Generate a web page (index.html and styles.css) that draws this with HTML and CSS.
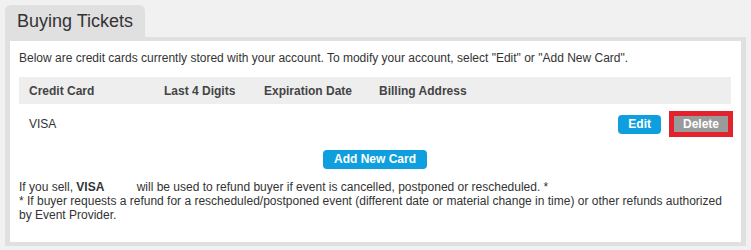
FILE: index.html
```html
<!DOCTYPE html>
<html lang="en">
<head>
  <meta charset="UTF-8">
  <title>Buying Tickets</title>
  <link rel="stylesheet" href="styles.css">
</head>
<body>
  <div class="tab">Buying Tickets</div>
  <div class="panel">
    <div class="panel-body">
      <p class="intro">Below are credit cards currently stored with your account. To modify your account, select "Edit" or "Add New Card".</p>

      <div class="card-table">
        <div class="card-head">
          <span>Credit Card</span>
          <span>Last 4 Digits</span>
          <span>Expiration Date</span>
          <span>Billing Address</span>
        </div>
        <div class="card-row">
          <span>VISA</span>
          <span></span>
          <span></span>
          <span></span>
          <div class="actions">
            <a href="#" class="btn btn-blue">Edit</a>
            <a href="#" class="btn btn-gray btn-marked">Delete</a>
          </div>
        </div>
      </div>

      <div class="add-row">
        <a href="#" class="btn btn-blue btn-add">Add New Card</a>
      </div>

      <p class="note">If you sell, <b class="card-name">VISA</b> will be used to refund buyer if event is cancelled, postponed or rescheduled. *<br>
      * If buyer requests a refund for a rescheduled/postponed event (different date or material change in time) or other refunds authorized by Event Provider.</p>
    </div>
  </div>
</body>
</html>
```

FILE: styles.css
```css
body {
  margin: 0;
  padding: 5px;
  background: #f1f1f1;
  font-family: "Liberation Sans", Arial, sans-serif;
  font-size: 12px;
  color: #333;
}
.tab {
  display: inline-block;
  height: 32px;
  line-height: 33px;
  padding: 0 12px;
  white-space: nowrap;
  font-size: 18px;
  color: #333;
  background: #e0e0e0;
  border-radius: 6px 6px 0 0;
  vertical-align: top;
}
.panel {
  background: #e0e0e0;
  padding: 4px 5px;
}
.panel-body {
  background: #fff;
  padding: 10px 10px 20px 9px;
}
.intro {
  margin: 0;
  line-height: 14px;
}
.card-table {
  margin-top: 12px;
}
.card-head,
.card-row {
  display: grid;
  grid-template-columns: 135px 100px 115px 1fr auto;
  align-items: center;
}
.card-head {
  grid-template-columns: 135px 100px 115px 1fr;
  height: 27px;
  background: #eee;
  font-weight: bold;
  color: #444;
}
.card-head span,
.card-row span {
  padding-left: 10px;
  white-space: nowrap;
}
.card-row {
  height: 40px;
}
.actions {
  display: flex;
  align-items: center;
  gap: 13px;
  padding-right: 3px;
}
.btn {
  display: inline-block;
  font-weight: bold;
  color: #fff;
  text-decoration: none;
  text-align: center;
  white-space: nowrap;
}
.btn-blue {
  background: #0f9fde;
  border-radius: 4px;
  height: 19px;
  line-height: 19px;
  padding: 0 10px;
}
.btn-gray {
  background: #9a9a9a;
  height: 16px;
  line-height: 16px;
  width: 54px;
}
.btn-marked {
  outline: 5px solid #e2222d;
}
.add-row {
  display: flex;
  justify-content: center;
  margin-top: 6px;
}
.btn-add {
  padding: 0 11px;
}
.note {
  margin: 11px 0 0;
  line-height: 14px;
}
.card-name {
  display: inline-block;
  width: 34px;
  margin-right: 23px;
}
```
